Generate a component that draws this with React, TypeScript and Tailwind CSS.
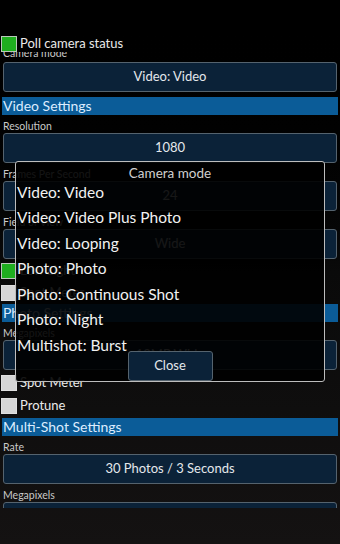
import React from "react";

const Btn = ({ children }: { children?: React.ReactNode }) => (
  <div className="mx-[3px] h-[30px] shrink-0 rounded-[3px] border-[1.5px] border-[#55636e] bg-[#0b2238] flex items-center justify-center text-[13px] text-[#e4e8ec]">
    {children}
  </div>
);

const Label = ({ children }: { children: React.ReactNode }) => (
  <div className="h-[18px] shrink-0 px-[3px] pt-[5px] text-[10.5px] leading-[12px] text-[#c9c9c9]">{children}</div>
);

const Header = ({ children }: { children: React.ReactNode }) => (
  <div className="mx-[2px] h-[18px] shrink-0 bg-[#0b5c98] px-[1px] text-[14px] leading-[18px] text-[#dcedff]">{children}</div>
);

const Check = ({ checked, children }: { checked?: boolean; children: React.ReactNode }) => (
  <div className="h-[17px] shrink-0 flex items-center gap-[3px] pl-[1px]">
    <div
      className={
        checked
          ? "w-[16px] h-[16px] border border-[#b9c9b9] bg-[#1fae1f]"
          : "w-[16px] h-[16px] border border-[#e0e0e0] bg-[#d6d6d6]"
      }
    />
    <span className="text-[13px] leading-[17px] text-[#eaeaea]">{children}</span>
  </div>
);

const items = [
  "Video: Video",
  "Video: Video Plus Photo",
  "Video: Looping",
  "Photo: Photo",
  "Photo: Continuous Shot",
  "Photo: Night",
  "Multishot: Burst",
];

export default function App() {
  return (
    <div
      className="relative w-[340px] h-[544px] overflow-hidden bg-linear-to-b from-black via-[#0a0a0a] to-[#141212]"
      style={{ fontFamily: "Lato, 'Open Sans', sans-serif" }}
    >
      <div className="h-[508px] overflow-hidden flex flex-col">
        <div className="h-[35px] shrink-0 bg-black" />
        <Check checked>Poll camera status</Check>
        <div className="h-[10px] shrink-0 overflow-hidden px-[3px]">
          <div className="-mt-[6px] text-[10.5px] leading-[14px] text-[#c9c9c9]">Camera mode</div>
        </div>
        <Btn>Video: Video</Btn>
        <div className="h-[5px] shrink-0" />
        <Header>Video Settings</Header>
        <Label>Resolution</Label>
        <Btn>1080</Btn>
        <Label>Frames Per Second</Label>
        <Btn>24</Btn>
        <Label>Field of View</Label>
        <Btn>Wide</Btn>
        <div className="h-[3px] shrink-0" />
        <Check checked>Low Light</Check>
        <div className="h-[5px] shrink-0" />
        <Check>Spot Meter</Check>
        <div className="h-[3px] shrink-0" />
        <Header>Photo Settings</Header>
        <Label>Megapixels</Label>
        <Btn>12MP Wide</Btn>
        <div className="h-[4px] shrink-0" />
        <Check>Spot Meter</Check>
        <div className="h-[6px] shrink-0" />
        <Check>Protune</Check>
        <div className="h-[4px] shrink-0" />
        <Header>Multi-Shot Settings</Header>
        <Label>Rate</Label>
        <Btn>30 Photos / 3 Seconds</Btn>
        <Label>Megapixels</Label>
        <Btn>12MP Wide</Btn>
      </div>

      {/* Dialog */}
      <div className="absolute left-[15px] top-[161px] w-[310px] h-[221px] rounded-[3px] border border-[#bdbdbd] bg-black/90 flex flex-col">
        <div className="h-[17.5px] shrink-0 text-center text-[13.5px] leading-[22px] text-[#cfcfcf]">Camera mode</div>
        {items.map((t) => (
          <div key={t} className="h-[25.5px] shrink-0 pl-[1px] text-[15.5px] leading-[25.5px] text-[#f2f2f2]">
            {t}
          </div>
        ))}
        <div className="-mt-[7px] flex justify-center">
          <div className="w-[85px] h-[30px] rounded-[3px] border-[1.5px] border-[#55636e] bg-[#0b2238] flex items-center justify-center text-[13px] text-[#e4e8ec]">
            Close
          </div>
        </div>
      </div>
    </div>
  );
}
